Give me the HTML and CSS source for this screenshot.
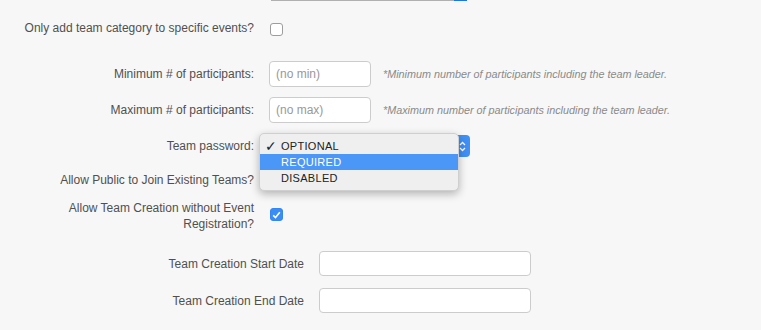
FILE: index.html
```html
<!DOCTYPE html>
<html lang="en">
<head>
  <meta charset="UTF-8" />
  <title>Team settings</title>
  <link rel="stylesheet" href="styles.css">
</head>
<body>
  <div class="prev-select"><span class="prev-body"></span><span class="prev-arrow"></span></div>

  <form class="team-form">
    <div class="row row-first">
      <label class="lbl">Only add team category to specific events?</label>
      <div class="ctl"><span class="check"></span></div>
    </div>

    <div class="row row-min">
      <label class="lbl">Minimum # of participants:</label>
      <div class="ctl">
        <input class="num" type="text" placeholder="(no min)">
        <span class="help">*Minimum number of participants including the team leader.</span>
      </div>
    </div>

    <div class="row row-max">
      <label class="lbl">Maximum # of participants:</label>
      <div class="ctl">
        <input class="num" type="text" placeholder="(no max)">
        <span class="help">*Maximum number of participants including the team leader.</span>
      </div>
    </div>

    <div class="row row-pass">
      <label class="lbl">Team password:</label>
      <div class="ctl">
        <div class="select">
          <span class="select-arrows">
            <svg width="7" height="11" viewBox="0 0 7 11"><path d="M1 4 L3.5 1.5 L6 4 M1 7 L3.5 9.5 L6 7" fill="none" stroke="#fff" stroke-width="1.3"/></svg>
          </span>
          <ul class="menu">
            <li class="opt"><span class="tick">✓</span>OPTIONAL</li>
            <li class="opt active">REQUIRED</li>
            <li class="opt">DISABLED</li>
          </ul>
        </div>
      </div>
    </div>

    <div class="row row-public">
      <label class="lbl">Allow Public to Join Existing Teams?</label>
      <div class="ctl"><span class="check"></span></div>
    </div>

    <div class="row row-create">
      <label class="lbl">Allow Team Creation without Event<br>Registration?</label>
      <div class="ctl">
        <span class="check checked">
          <svg width="9" height="8" viewBox="0 0 9 8"><path d="M1.2 4.3 L3.5 6.5 L7.8 1.3" fill="none" stroke="#fff" stroke-width="1.6"/></svg>
        </span>
      </div>
    </div>

    <div class="row date-row row-start">
      <label class="lbl">Team Creation Start Date</label>
      <div class="ctl"><input class="date" type="text"></div>
    </div>

    <div class="row date-row row-end">
      <label class="lbl">Team Creation End Date</label>
      <div class="ctl"><input class="date" type="text"></div>
    </div>
  </form>
</body>
</html>
```

FILE: styles.css
```css
body {
  margin: 0;
  background: #f7f7f7;
  font-family: "Liberation Sans", Arial, sans-serif;
  font-size: 12px;
  color: #505050;
  height: 330px;
  overflow: hidden;
}
.prev-select {
  margin-left: 271px;
  width: 196px;
  height: 1px;
  display: flex;
}
.prev-body {
  width: 183px;
  background: #b0b0b0;
}
.prev-arrow {
  width: 13px;
  background: #1a73f0;
}
.team-form { margin: 0; }
.row {
  display: grid;
  grid-template-columns: 254px 1fr;
  column-gap: 15px;
  align-items: center;
}
.lbl {
  text-align: right;
  line-height: 16px;
}
.ctl {
  display: flex;
  align-items: center;
}
.row-first { margin-top: 14px; height: 26px; }
.row-min { margin-top: 20px; height: 26px; }
.row-max { margin-top: 10px; height: 26px; }
.row-pass { margin-top: 12px; height: 22px; }
.row-public { margin-top: 13px; height: 20px; }
.row-create { margin-top: 10px; height: 32px; }
.row-start { margin-top: 19px; height: 25px; }
.row-end { margin-top: 12px; height: 25px; }
.date-row {
  grid-template-columns: 304px 1fr;
}
.check {
  margin-left: 1px;
  width: 11px;
  height: 11px;
  border: 1px solid #9d9d9d;
  border-radius: 3px;
  background: #fff;
  display: flex;
  align-items: center;
  justify-content: center;
}
.row-first .check { margin-top: 3px; }
.check.checked {
  background: #3a8df4;
  border-color: #3486f0;
  margin-top: -3px;
}
.num, .date {
  box-sizing: border-box;
  height: 26px;
  border: 1px solid #ccc;
  border-radius: 4px;
  background: #fff;
  font-family: inherit;
  font-size: 12px;
  padding: 0 6px;
  margin: 0;
  outline: none;
}
.num { width: 102px; }
.num::placeholder { color: #999; }
.date {
  width: 212px;
  height: 25px;
}
.help {
  margin-left: 12px;
  font-size: 10.8px;
  font-style: italic;
  color: #8a8a8a;
}
.select {
  position: relative;
  width: 201px;
  height: 22px;
  border-radius: 4px;
  background: #fff;
}
.select-arrows {
  position: absolute;
  right: 0;
  top: 0;
  width: 16px;
  height: 22px;
  border-radius: 0 4px 4px 0;
  background: #3f8ff5;
  display: flex;
  align-items: center;
  justify-content: center;
}
.menu {
  position: absolute;
  left: -10px;
  top: -2px;
  width: 200px;
  margin: 0;
  padding: 4px 0;
  list-style: none;
  background: #efefef;
  border: 1px solid #cfcfcf;
  border-radius: 5px;
  box-sizing: border-box;
  box-shadow: 0 3px 9px rgba(0, 0, 0, 0.28);
  color: #222;
  font-size: 11px;
  letter-spacing: 0.3px;
}
.opt {
  position: relative;
  height: 16px;
  line-height: 16px;
  padding-left: 21px;
}
.opt.active {
  background: #4a97f8;
  color: #fff;
}
.tick {
  position: absolute;
  left: 5px;
  top: 0;
  font-size: 14px;
  font-weight: bold;
  font-family: "DejaVu Sans", sans-serif;
}
```
